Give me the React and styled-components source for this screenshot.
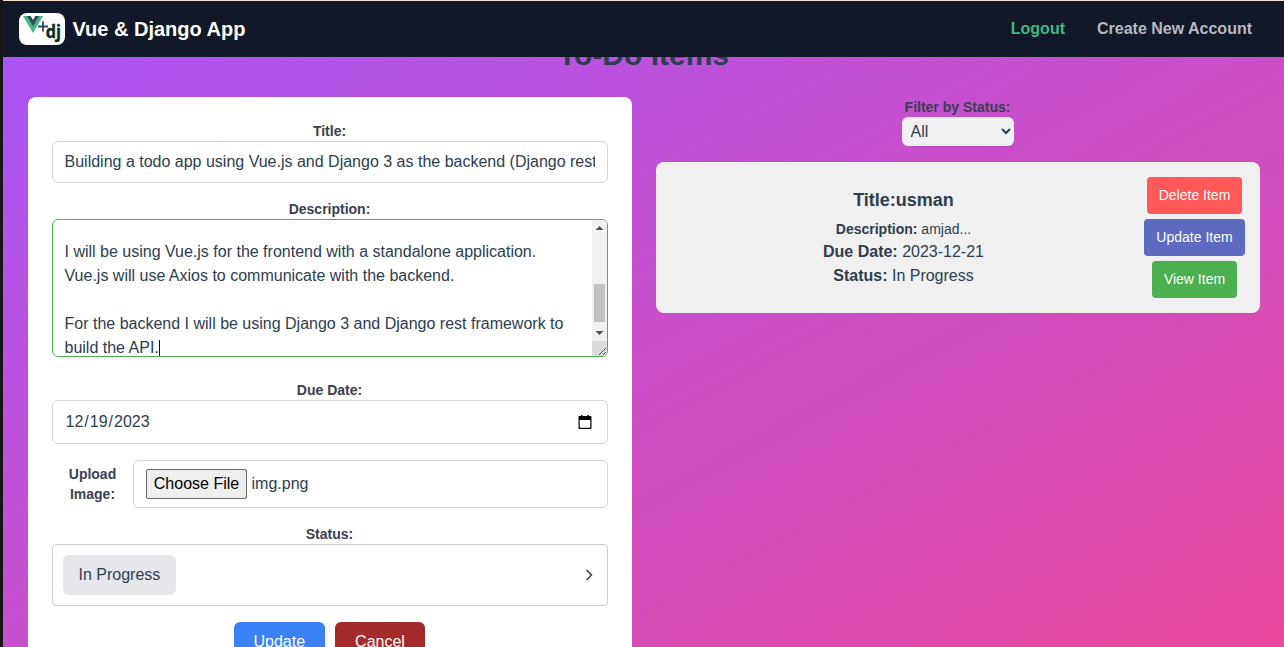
import React from 'react';
import styled, { createGlobalStyle } from 'styled-components';

const GlobalStyle = createGlobalStyle`
  *, *::before, *::after { box-sizing: border-box; }
  body { margin: 0; overflow: hidden; }
  h1, h2, p { margin: 0; }
  button, select, input { font-family: inherit; }
`;

const Frame = styled.div`
  height: 647px;
  padding-left: 3px;
  background: #161616;
  font-family: "Liberation Sans", Arial, sans-serif;
  font-size: 16px;
  line-height: 24px;
  color: #2c3e50;
  overflow: hidden;
`;

const Page = styled.div`
  height: 647px;
  display: flex;
  flex-direction: column;
  border-top: 1px solid #f3dccd;
  background: #111827;
`;

const Navbar = styled.nav`
  flex: none;
  height: 56px;
  display: flex;
  align-items: center;
  justify-content: space-between;
  padding: 0 32px 0 16px;
  background: #111827;
`;

const Brand = styled.div`
  display: flex;
  align-items: center;
  gap: 7.5px;
  font-size: 20px;
  font-weight: 700;
  color: #fff;
`;

const LogoSvg = styled.svg`
  display: block;
  width: 46px;
  height: 32px;
  border-radius: 8px;
  background: #fff;
`;

const NavLinks = styled.div`
  display: flex;
  gap: 32px;
`;

const NavLink = styled.a`
  font-weight: 700;
  color: ${(p) => (p.$active ? '#42b983' : '#b6bac1')};
`;

const Content = styled.main`
  flex: 1;
  min-height: 0;
  overflow: hidden;
  padding: 0 24.5px;
  background: linear-gradient(to bottom right, #a855f7, #ec4899) 0 -36px / 100% 690px no-repeat;
`;

const Heading = styled.h1`
  margin: -20px 0 24px;
  font-size: 30px;
  line-height: 36px;
  font-weight: 700;
  text-align: center;
`;

const Columns = styled.div`
  display: grid;
  grid-template-columns: repeat(2, minmax(0, 1fr));
  gap: 24px;
  align-items: start;
`;

const FormCard = styled.form`
  padding: 24px;
  height: 620px;
  border-radius: 8px;
  background: #fff;
`;

const Field = styled.div`
  margin-bottom: ${(p) => p.$gap || 16}px;
`;

const Label = styled.label`
  display: block;
  font-size: 14px;
  line-height: 20px;
  font-weight: 700;
  text-align: center;
  color: #374151;
`;

const Control = styled.div`
  display: flex;
  align-items: center;
  height: ${(p) => p.$height}px;
  padding: 0 12px;
  border: 1px solid #d1d5db;
  border-radius: 6px;
  background: #fff;
`;

const TitleText = styled.div`
  flex: 1;
  height: 24px;
  line-height: 23px;
  overflow: hidden;
  white-space: nowrap;
`;

const TextArea = styled.div`
  display: flex;
  height: 138px;
  border: 1px solid #4caf50;
  border-radius: 6px;
  overflow: hidden;
`;

const TextLines = styled.div`
  flex: 1;
  display: flex;
  flex-direction: column;
  justify-content: flex-end;
  padding: 0 12px;
  margin-bottom: -4px;
  white-space: pre;
`;

const Line = styled.div`
  display: flex;
  align-items: center;
  height: 24px;
`;

const Caret = styled.span`
  width: 1px;
  height: 17px;
  background: #111;
`;

const Scrollbar = styled.div`
  width: 15px;
  display: flex;
  flex-direction: column;
  background: #f1f1f1;
`;

const Arrow = styled.svg`
  display: block;
  width: 15px;
  height: 17px;
`;

const Thumb = styled.div`
  width: 11px;
  height: 38px;
  margin: 47px 2px 2px;
  background: #c1c1c1;
`;

const Grip = styled.svg`
  display: block;
  width: 15px;
  height: 15px;
  background: #dcdcdc;
`;

const DateControl = styled(Control)`
  justify-content: space-between;
  padding: 0 14px 0 12px;
`;

const DatePart = styled.span`
  padding: 0 1px;
`;

const UploadRow = styled.div`
  display: grid;
  grid-template-columns: 81px 1fr;
  align-items: center;
  margin-bottom: 16px;

  ${Label} { padding: 0 9.5px 0 10.5px; }
`;

const FileControl = styled(Control)`
  gap: 5px;
  padding-bottom: 1px;
`;

const FileButton = styled.button`
  width: 101px;
  height: 30px;
  padding: 0 0 0 1px;
  border: 1px solid #6b6b6b;
  border-radius: 2px;
  background: #efefef;
  font-size: 16px;
  line-height: 24px;
  color: #000;
`;

const StatusBox = styled.div`
  display: flex;
  align-items: center;
  justify-content: space-between;
  height: 62px;
  padding: 0 10px;
  border: 1px solid #ccc;
  border-radius: 4px;
`;

const Chip = styled.span`
  height: 40px;
  padding: 0 16px 1px;
  line-height: 39px;
  border-radius: 6px;
  background: #e5e7eb;
`;

const Actions = styled.div`
  display: flex;
  justify-content: center;
  gap: 10px;
`;

const ActionButton = styled.button`
  width: ${(p) => p.$width}px;
  height: 40px;
  padding: 0;
  border: 0;
  border-radius: 6px;
  background: ${(p) => p.$color};
  color: #fff;
  font-size: 16px;
`;

const Filter = styled.div`
  display: flex;
  flex-direction: column;
  align-items: center;
  margin-bottom: 16px;
`;

const FilterSelect = styled.select`
  width: 112px;
  height: 29px;
  padding: 0 4px 0 5px;
  border: 0;
  border-radius: 6px;
  background: #f0f0f0;
  color: #2c3e50;
  font-size: 16px;
`;

const ItemCard = styled.article`
  display: flex;
  height: 151px;
  padding: 0 15px 0 16px;
  border-radius: 8px;
  background: #f0f0f0;
`;

const ItemInfo = styled.div`
  flex: 1;
  padding: 24px 16px 0 8px;
  text-align: center;
`;

const ItemTitle = styled.h2`
  margin-bottom: 5px;
  font-size: 18px;
  line-height: 28px;
`;

const ItemText = styled.p`
  font-size: ${(p) => (p.$small ? 14 : 16)}px;
  line-height: ${(p) => (p.$small ? 21 : 24)}px;
`;

const ItemActions = styled.div`
  display: flex;
  flex-direction: column;
  align-items: center;
  gap: 5px;
  padding-top: 15px;
`;

const ItemButton = styled.button`
  width: ${(p) => p.$width}px;
  height: 37px;
  padding: 0 0 1px 1px;
  border: 0;
  border-radius: 4px;
  background: ${(p) => p.$color};
  color: #fff;
  font-size: 14px;
`;

function Logo() {
  return (
    <LogoSvg viewBox="0 0 46 32">
      <path d="M4 3h5l5 9 5-9h5L14 20z" fill="#41b883" />
      <path d="M8 3h3.700L14 7l2.300-4H20l-6 10.300z" fill="#35495e" />
      <path d="M19 13.500h10M24 8.500v10" stroke="#35495e" strokeWidth="1.900" />
      <text x="26.800" y="25.300" fontSize="18.500" fontWeight="700" fontFamily="Open Sans, sans-serif" fill="#092e20" stroke="#092e20" strokeWidth="0.400" textLength="15.200" lengthAdjust="spacingAndGlyphs">dj</text>
    </LogoSvg>
  );
}

const descriptionLines = [
  'I will be using Vue.js for the frontend with a standalone application.',
  'Vue.js will use Axios to communicate with the backend.',
  '',
  'For the backend I will be using Django 3 and Django rest framework to',
];

const itemActions = [
  { label: 'Delete Item', color: '#ff5858', width: 95 },
  { label: 'Update Item', color: '#5c6bc0', width: 101 },
  { label: 'View Item', color: '#4caf50', width: 85 },
];

export default function App() {
  return (
    <Frame>
      <GlobalStyle />
      <Page>
        <Navbar>
          <Brand><Logo />Vue &amp; Django App</Brand>
          <NavLinks>
            <NavLink $active>Logout</NavLink>
            <NavLink>Create New Account</NavLink>
          </NavLinks>
        </Navbar>
        <Content>
          <Heading>To-Do Items</Heading>
          <Columns>
            <FormCard>
              <Field>
                <Label>Title:</Label>
                <Control $height={42}>
                  <TitleText>Building a todo app using Vue.js and Django 3 as the backend (Django rest framework)</TitleText>
                </Control>
              </Field>
              <Field $gap={23}>
                <Label>Description:</Label>
                <TextArea>
                  <TextLines>
                    {descriptionLines.map((line, i) => <Line key={i}>{line}</Line>)}
                    <Line>build the API.<Caret /></Line>
                  </TextLines>
                  <Scrollbar>
                    <Arrow viewBox="0 0 15 17"><path d="M3.500 10h8l-4-4z" fill="#505050" /></Arrow>
                    <Thumb />
                    <Arrow viewBox="0 0 15 17"><path d="M3.500 7h8l-4 4z" fill="#505050" /></Arrow>
                    <Grip viewBox="0 0 15 15"><path d="M7 14l7-7M11 14l3-3" stroke="#555" fill="none" /></Grip>
                  </Scrollbar>
                </TextArea>
              </Field>
              <Field>
                <Label>Due Date:</Label>
                <DateControl $height={44}>
                  <div><DatePart>12</DatePart>/<DatePart>19</DatePart>/<DatePart>2023</DatePart></div>
                  <svg width="16" height="16" viewBox="0 0 16 16">
                    <path d="M3 2h1V1h1.500v1h5V1H12v1h1.500q1 0 1 1v11q0 1-1 1h-11q-1 0-1-1V3q0-1 1-1zM2.700 6v7.800h10.600V6z" fill="#000" fillRule="evenodd" />
                  </svg>
                </DateControl>
              </Field>
              <UploadRow>
                <Label>Upload Image:</Label>
                <FileControl $height={48}>
                  <FileButton type="button">Choose File</FileButton>
                  <span>img.png</span>
                </FileControl>
              </UploadRow>
              <Field>
                <Label>Status:</Label>
                <StatusBox>
                  <Chip>In Progress</Chip>
                  <svg width="16" height="16" viewBox="0 0 16 16">
                    <path d="M5.500 3l5 5-5 5" fill="none" stroke="#374151" strokeWidth="1.500" />
                  </svg>
                </StatusBox>
              </Field>
              <Actions>
                <ActionButton type="button" $width={91} $color="#3b82f6">Update</ActionButton>
                <ActionButton type="button" $width={90.5} $color="#a52a2a">Cancel</ActionButton>
              </Actions>
            </FormCard>
            <section>
              <Filter>
                <Label>Filter by Status:</Label>
                <FilterSelect defaultValue="All"><option>All</option></FilterSelect>
              </Filter>
              <ItemCard>
                <ItemInfo>
                  <ItemTitle>Title:usman</ItemTitle>
                  <ItemText $small><b>Description:</b> amjad...</ItemText>
                  <ItemText><b>Due Date:</b> 2023-12-21</ItemText>
                  <ItemText><b>Status:</b> In Progress</ItemText>
                </ItemInfo>
                <ItemActions>
                  {itemActions.map((a) => (
                    <ItemButton key={a.label} type="button" $color={a.color} $width={a.width}>{a.label}</ItemButton>
                  ))}
                </ItemActions>
              </ItemCard>
            </section>
          </Columns>
        </Content>
      </Page>
    </Frame>
  );
}
